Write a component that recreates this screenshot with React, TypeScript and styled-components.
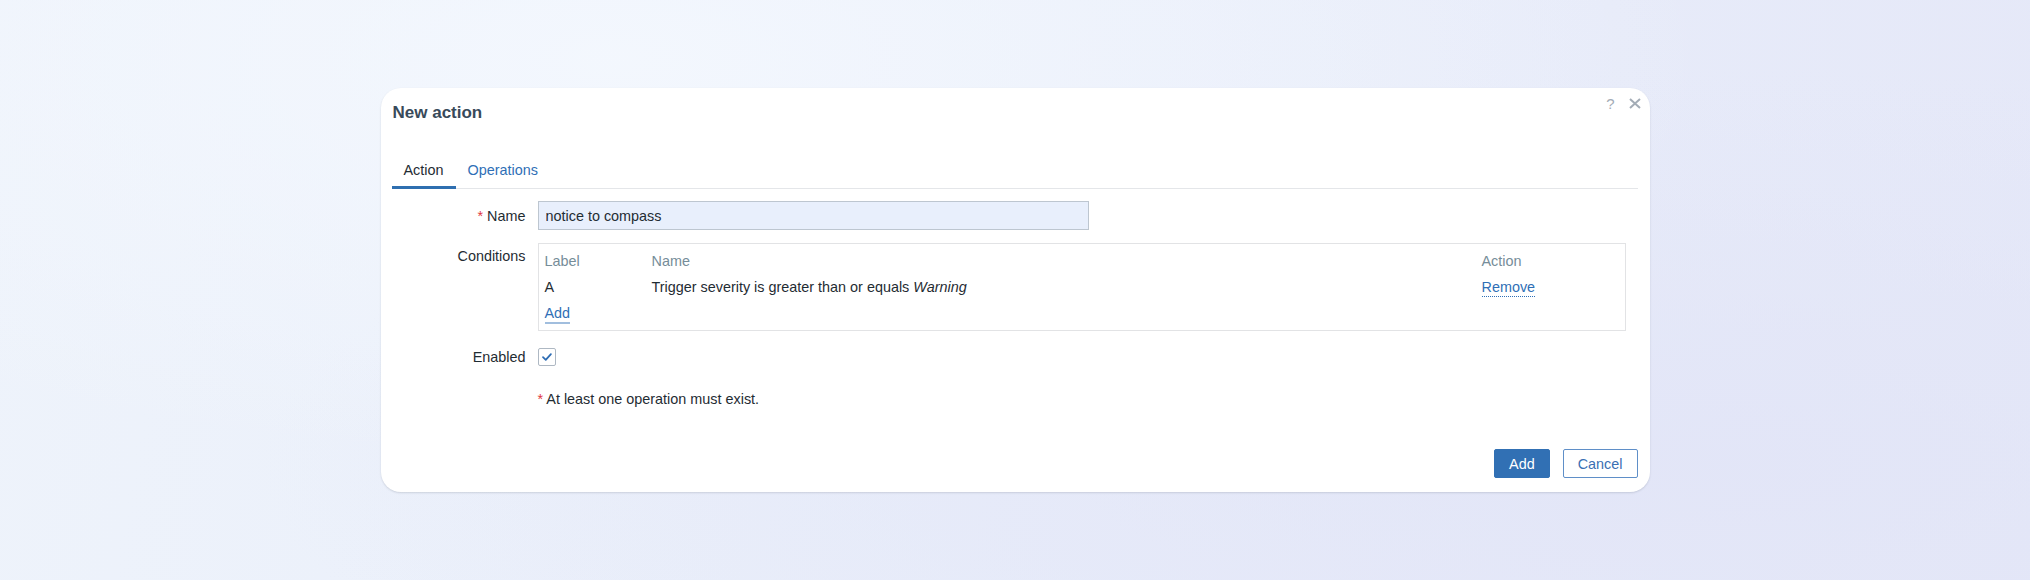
import React from "react";
import styled, { createGlobalStyle } from "styled-components";

const TEXT = "#1f2c33";
const LINK = "#2f6fb6";
const MUTED = "#768d99";

const GlobalStyle = createGlobalStyle`
  html, body {
    margin: 0;
    padding: 0;
  }
  body {
    font-family: "Liberation Sans", Arial, sans-serif;
    color: ${TEXT};
  }
`;

const App: React.FC = () => {
  return (
    <Page>
      <GlobalStyle />
      <Dialog>
        <Header>
          <Title>New action</Title>
          <HeaderIcons>
            <HelpIcon>?</HelpIcon>
            <CloseIcon viewBox="0 0 12 11">
              <path d="M1 1 L11 10 M11 1 L1 10" />
            </CloseIcon>
          </HeaderIcons>
        </Header>

        <TabList>
          <Tab $active>Action</Tab>
          <Tab>Operations</Tab>
        </TabList>

        <Form>
          <Row $gap={12}>
            <Label>
              <Star>*</Star> Name
            </Label>
            <Input defaultValue="notice to compass" />
          </Row>

          <Row $gap={13} $top>
            <Label $pad={4}>Conditions</Label>
            <ConditionBox>
              <Table>
                <thead>
                  <tr>
                    <Th $width={107}>Label</Th>
                    <Th>Name</Th>
                    <Th $width={137}>Action</Th>
                  </tr>
                </thead>
                <tbody>
                  <tr>
                    <Td>A</Td>
                    <Td>
                      Trigger severity is greater than or equals <em>Warning</em>
                    </Td>
                    <Td>
                      <DottedLink>Remove</DottedLink>
                    </Td>
                  </tr>
                  <tr>
                    <Td colSpan={3}>
                      <SolidLink>Add</SolidLink>
                    </Td>
                  </tr>
                </tbody>
              </Table>
            </ConditionBox>
          </Row>

          <Row $gap={17}>
            <Label>Enabled</Label>
            <Checkbox>
              <svg width="18" height="18" viewBox="0 0 18 18">
                <path d="M4.5 9.2 L7.6 12.2 L13.4 5.8" />
              </svg>
            </Checkbox>
          </Row>

          <Row $gap={24}>
            <span />
            <Note>
              <Star>*</Star> At least one operation must exist.
            </Note>
          </Row>
        </Form>

        <Footer>
          <PrimaryButton>Add</PrimaryButton>
          <OutlineButton>Cancel</OutlineButton>
        </Footer>
      </Dialog>
    </Page>
  );
};

export default App;

const Page = styled.div`
  width: 2030px;
  height: 580px;
  display: flex;
  align-items: center;
  justify-content: center;
  background:
    radial-gradient(ellipse at 30% 10%, rgba(244, 248, 254, 0.9), transparent 55%),
    radial-gradient(ellipse at 85% 80%, rgba(226, 229, 247, 0.9), transparent 60%),
    linear-gradient(100deg, #eef3fb 0%, #e9eefa 50%, #e5e8f8 100%);
`;

const Dialog = styled.div`
  width: 1269px;
  height: 404px;
  box-sizing: border-box;
  padding: 0 12px 14px 11px;
  background: #ffffff;
  border-radius: 20px;
  box-shadow: 0 1px 2px rgba(60, 70, 90, 0.18);
  display: flex;
  flex-direction: column;
`;

const Header = styled.div`
  display: flex;
  justify-content: space-between;
  align-items: flex-start;
  padding-top: 15px;
`;

const Title = styled.h1`
  margin: 0 0 0 1px;
  font-size: 17px;
  line-height: 20px;
  font-weight: 700;
  color: #384a5a;
`;

const HeaderIcons = styled.div`
  display: flex;
  align-items: center;
  gap: 14px;
  margin: -6px -3px 0 0;
  height: 13px;
`;

const HelpIcon = styled.span`
  font-size: 15px;
  line-height: 13px;
  color: #a3acb6;
`;

const CloseIcon = styled.svg`
  width: 12px;
  height: 11px;
  stroke: #a3acb6;
  stroke-width: 2;
  fill: none;
`;

const TabList = styled.div`
  display: flex;
  margin-top: 30px;
  border-bottom: 1px solid #e4e6e9;
`;

const Tab = styled.div<{ $active?: boolean }>`
  padding: 8px 12px 7px;
  margin-bottom: -1px;
  font-size: 14.4px;
  line-height: 18px;
  color: ${(p) => (p.$active ? TEXT : LINK)};
  border-bottom: 3px solid ${(p) => (p.$active ? "#2f6fb0" : "transparent")};
`;

const Form = styled.div`
  display: flex;
  flex-direction: column;
`;

const Row = styled.div<{ $gap: number; $top?: boolean }>`
  display: grid;
  grid-template-columns: 134px 1fr;
  column-gap: 12px;
  align-items: ${(p) => (p.$top ? "start" : "center")};
  margin-top: ${(p) => p.$gap}px;
`;

const Label = styled.div<{ $pad?: number }>`
  text-align: right;
  font-size: 14.4px;
  line-height: 18px;
  padding-top: ${(p) => p.$pad ?? 0}px;
`;

const Star = styled.span`
  color: #e0393e;
`;

const Input = styled.input`
  width: 551px;
  height: 29px;
  box-sizing: border-box;
  padding: 0 7px;
  border: 1px solid #bdc6d0;
  background: #e8effc;
  font-family: inherit;
  font-size: 14.4px;
  color: ${TEXT};
  outline: none;
`;

const ConditionBox = styled.div`
  width: 1088px;
  box-sizing: border-box;
  border: 1px solid #e2e3e5;
  padding: 4px 6px;
`;

const Table = styled.table`
  width: 100%;
  border-collapse: collapse;
  font-size: 14.4px;
`;

const Th = styled.th<{ $width?: number }>`
  width: ${(p) => (p.$width ? `${p.$width}px` : "auto")};
  height: 26px;
  padding: 0;
  text-align: left;
  font-weight: 400;
  color: ${MUTED};
`;

const Td = styled.td`
  height: 26px;
  padding: 0;
  vertical-align: middle;

  em {
    font-style: italic;
  }
`;

const DottedLink = styled.span`
  color: ${LINK};
  border-bottom: 1px dotted ${LINK};
  padding-bottom: 1px;
`;

const SolidLink = styled.span`
  color: ${LINK};
  border-bottom: 2px solid rgba(47, 111, 182, 0.45);
  padding-bottom: 1px;
`;

const Checkbox = styled.div`
  width: 18px;
  height: 18px;
  box-sizing: border-box;
  border: 1px solid #aeb8c3;
  border-radius: 2px;
  display: flex;
  align-items: center;
  justify-content: center;

  svg {
    fill: none;
    stroke: #2e6db4;
    stroke-width: 2;
    stroke-linecap: round;
    stroke-linejoin: round;
  }
`;

const Note = styled.div`
  font-size: 14.4px;
  line-height: 18px;
`;

const Footer = styled.div`
  margin-top: auto;
  display: flex;
  justify-content: flex-end;
  gap: 13px;
`;

const PrimaryButton = styled.button`
  height: 29px;
  padding: 0 14px;
  border: 1px solid #3170b4;
  border-radius: 2px;
  background: #3170b4;
  color: #ffffff;
  font-family: inherit;
  font-size: 14.4px;
`;

const OutlineButton = styled.button`
  height: 29px;
  padding: 0 14px;
  border: 1px solid #5f8fc8;
  border-radius: 2px;
  background: #ffffff;
  color: #3a6fb3;
  font-family: inherit;
  font-size: 14.4px;
`;
